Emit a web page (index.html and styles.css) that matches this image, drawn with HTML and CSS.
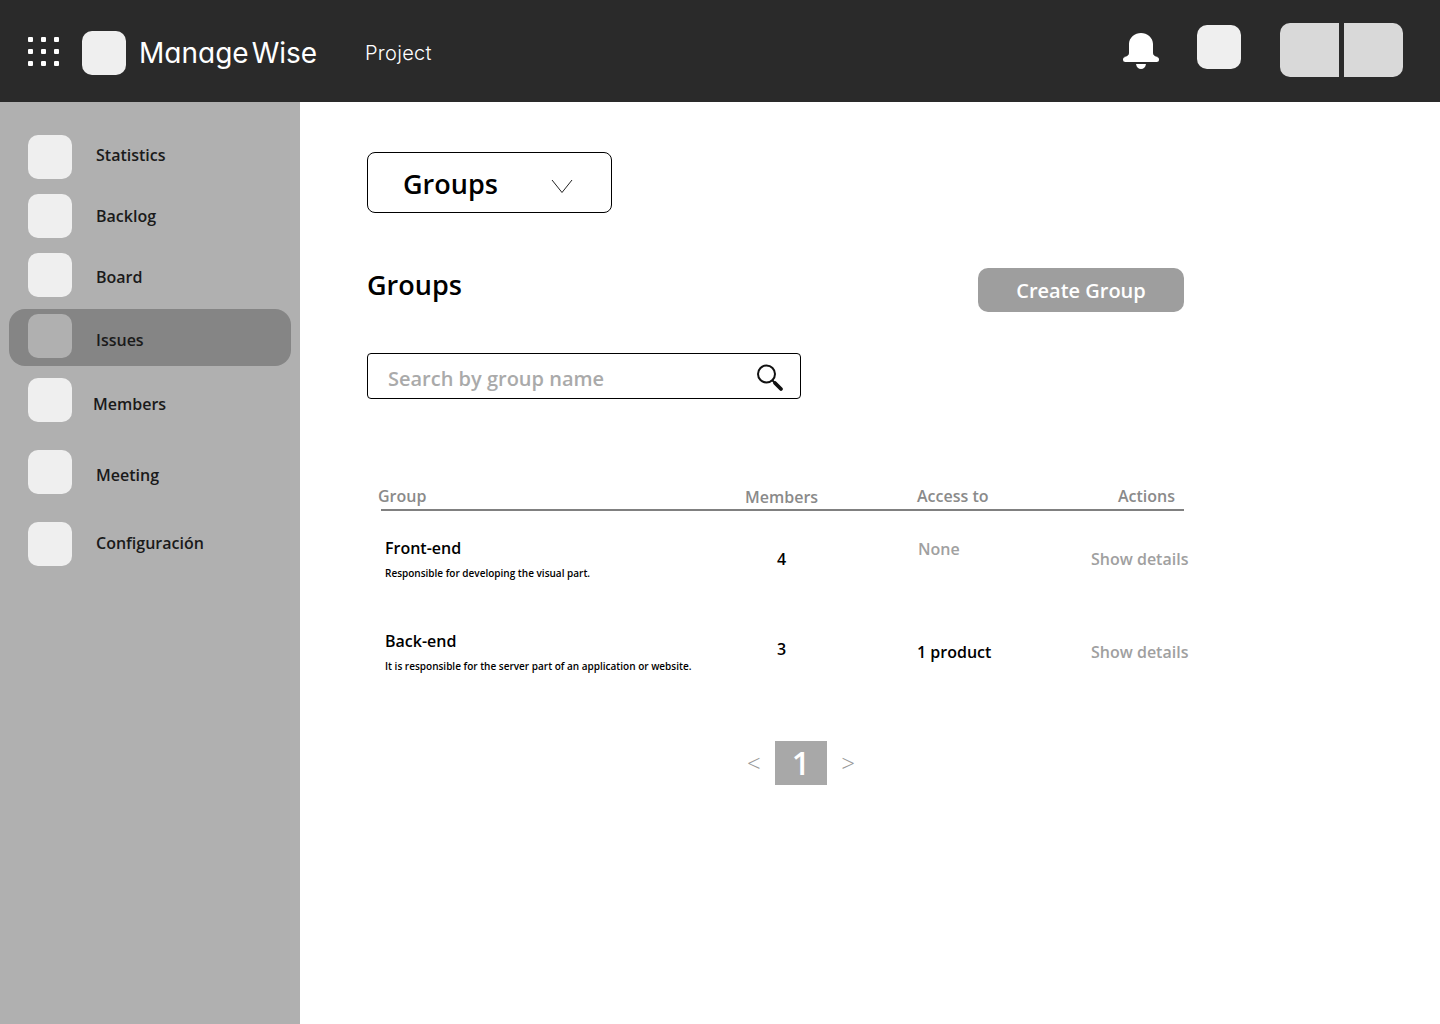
FILE: index.html
```html
<!DOCTYPE html>
<html lang="en">
<head>
  <meta charset="UTF-8" />
  <meta name="viewport" content="width=device-width, initial-scale=1.0"/>
  <title>ManageWise - Groups</title>
  <link rel="stylesheet" href="styles.css">
</head>
<body>
  <header class="topbar">
    <div class="apps-grid">
      <span></span><span></span><span></span>
      <span></span><span></span><span></span>
      <span></span><span></span><span></span>
    </div>
    <div class="logo-box"></div>
    <div class="brand">Manage<span class="brand-end">Wise</span></div>
    <div class="project-link">Project</div>
    <div class="topbar-right">
      <svg class="bell" width="36" height="36" viewBox="0 0 36 36" fill="#fff">
        <path d="M18 0C12 0 6 4.500 6 11V20C6 22 4.500 23.500 1 24H35C31.500 23.500 30 22 30 20V11C30 4.500 24 0 18 0Z"/>
        <rect x="0" y="24" width="36" height="5" rx="2.500"/>
        <path d="M13 31H23C22.500 34.500 20.500 36 18 36C15.500 36 13.500 34.500 13 31Z"/>
      </svg>
      <div class="square-btn"></div>
      <div class="user-box">
        <div class="user-left"></div>
        <div class="user-right"></div>
      </div>
    </div>
  </header>

  <div class="layout">
    <aside class="sidebar">
      <nav class="nav">
        <a class="nav-item label-up"><span class="nav-icon"></span><span class="nav-label">Statistics</span></a>
        <a class="nav-item"><span class="nav-icon"></span><span class="nav-label">Backlog</span></a>
        <a class="nav-item label-down"><span class="nav-icon"></span><span class="nav-label">Board</span></a>
        <a class="nav-item active"><span class="nav-icon"></span><span class="nav-label">Issues</span></a>
        <a class="nav-item members label-low"><span class="nav-icon"></span><span class="nav-label">Members</span></a>
        <a class="nav-item wide label-mid"><span class="nav-icon"></span><span class="nav-label">Meeting</span></a>
        <a class="nav-item wide label-raised"><span class="nav-icon"></span><span class="nav-label">Configuración</span></a>
      </nav>
    </aside>

    <main class="content">
      <div class="dropdown">
        <span>Groups</span>
        <svg width="22" height="14" viewBox="0 0 22 14" fill="none" stroke="#222" stroke-width="1">
          <path d="M1 1L11 13.500L21 1"/>
        </svg>
      </div>

      <div class="title-row">
        <h1>Groups</h1>
        <button class="btn-create">Create Group</button>
      </div>

      <div class="search">
        <span>Search by group name</span>
        <svg width="28" height="28" viewBox="0 0 28 28" fill="none" stroke="#111">
          <circle cx="10.500" cy="10" r="8.500" stroke-width="2"/>
          <path d="M16.500 16.500L19 19" stroke-width="1.800"/>
          <path d="M19 19L25 25" stroke-width="3.800" stroke-linecap="round"/>
        </svg>
      </div>

      <div class="table">
        <div class="table-head">
          <div class="th-group">Group</div>
          <div class="th-members">Members</div>
          <div>Access to</div>
          <div class="th-actions">Actions</div>
        </div>

        <div class="table-row">
          <div>
            <div class="group-name">Front-end</div>
            <div class="group-desc">Responsible for developing the visual part.</div>
          </div>
          <div class="cell-count count-low">4</div>
          <div class="cell-access muted">None</div>
          <div class="cell-action">Show details</div>
        </div>

        <div class="table-row">
          <div>
            <div class="group-name">Back-end</div>
            <div class="group-desc">It is responsible for the server part of an application or website.</div>
          </div>
          <div class="cell-count">3</div>
          <div class="cell-access access-low">1 product</div>
          <div class="cell-action">Show details</div>
        </div>
      </div>

      <div class="pagination">
        <span class="page-arrow">&lt;</span>
        <span class="page-num">1</span>
        <span class="page-arrow">&gt;</span>
      </div>
    </main>
  </div>
</body>
</html>
```

FILE: styles.css
```css
:root {
  --color-dark: #2a2a2a;
  --color-side: #b0b0b0;
  --color-box: #efefef;
  --color-muted: #a0a0a0;
  --color-head: #8a8a8a;
  --font: 'Open Sans', sans-serif;
}
* {
  box-sizing: border-box;
}
body {
  margin: 0;
  font-family: var(--font);
  background: #fff;
  color: #000;
}

/* top bar */
.topbar {
  height: 102px;
  background: var(--color-dark);
  display: flex;
  align-items: center;
  padding: 0 37px 0 28px;
}
.apps-grid {
  display: grid;
  grid-template-columns: repeat(3, 5px);
  grid-template-rows: repeat(3, 5px);
  gap: 7px 8px;
  width: 31px;
  margin-right: 23px;
  margin-top: 1px;
}
.apps-grid span {
  background: #fff;
  border-radius: 1px;
}
.logo-box {
  width: 44px;
  height: 44px;
  background: var(--color-box);
  border-radius: 10px;
  margin-top: 4px;
  margin-right: 13px;
}
.brand {
  font-family: 'Inter', sans-serif;
  font-feature-settings: 'cv11';
  font-weight: 400;
  font-size: 28px;
  color: #fff;
  margin-top: 3px;
  width: 226px;
}
.brand-end {
  margin-left: 3px;
}
.project-link {
  font-family: 'Inter', sans-serif;
  font-weight: 300;
  font-size: 20px;
  letter-spacing: 0.3px;
  color: #fff;
  margin-top: 3px;
}
.topbar-right {
  margin-left: auto;
  display: flex;
  align-items: center;
}
.bell {
  margin-right: 38px;
}
.square-btn {
  width: 44px;
  height: 44px;
  background: var(--color-box);
  border-radius: 10px;
  margin-right: 39px;
  margin-bottom: 8px;
}
.user-box {
  display: flex;
  gap: 5px;
  margin-bottom: 2px;
}
.user-left,
.user-right {
  width: 59px;
  height: 54px;
  background: #d9d9d9;
}
.user-left {
  border-radius: 10px 0 0 10px;
}
.user-right {
  border-radius: 0 10px 10px 0;
}

/* sidebar */
.layout {
  display: flex;
  height: 922px;
}
.sidebar {
  width: 300px;
  flex-shrink: 0;
  background: var(--color-side);
  padding: 33px 9px 0;
}
.nav {
  display: flex;
  flex-direction: column;
}
.nav-item {
  display: flex;
  align-items: center;
  height: 44px;
  padding-left: 19px;
  margin-bottom: 15px;
}
.nav-icon {
  width: 44px;
  height: 44px;
  background: var(--color-box);
  border-radius: 10px;
  flex-shrink: 0;
}
.nav-label {
  margin-left: 24px;
  font-size: 16px;
  font-weight: 600;
  color: #1a1a1a;
}
.label-up .nav-label {
  margin-top: -4px;
}
.label-down .nav-label {
  margin-top: 4px;
}
.label-low .nav-label {
  margin-top: 7px;
}
.label-mid .nav-label {
  margin-top: 5px;
}
.label-raised .nav-label {
  margin-top: -2px;
}
.nav-item.active {
  height: 57px;
  margin-top: -3px;
  margin-bottom: 12px;
  background: #858585;
  border-radius: 16px;
  align-items: flex-start;
  padding-top: 5px;
}
.active .nav-icon {
  background: var(--color-side);
}
.active .nav-label {
  margin-top: 15px;
}
.nav-item.members {
  margin-bottom: 28px;
}
.members .nav-label {
  margin-left: 21px;
}
.nav-item.wide {
  margin-bottom: 28px;
}

/* main */
.content {
  flex: 1;
  padding: 50px 0 0 67px;
}
.dropdown {
  width: 245px;
  height: 61px;
  border: 1px solid #000;
  border-radius: 8px;
  display: flex;
  align-items: center;
  padding: 2px 38px 0 35px;
  justify-content: space-between;
  font-size: 27px;
  font-weight: 600;
}
.dropdown svg {
  margin-top: 5px;
}
.title-row {
  width: 817px;
  display: flex;
  justify-content: space-between;
  align-items: flex-start;
  margin-top: 55px;
}
.title-row h1 {
  margin: -1px 0 0;
  font-size: 27px;
  font-weight: 600;
  line-height: 36px;
}
.btn-create {
  width: 206px;
  height: 44px;
  border: none;
  border-radius: 10px;
  background: #9e9e9e;
  color: #fff;
  font-family: var(--font);
  font-size: 20px;
  font-weight: 600;
  cursor: pointer;
}
.search {
  width: 434px;
  height: 46px;
  margin-top: 41px;
  border: 1px solid #000;
  border-radius: 4px;
  display: flex;
  align-items: center;
  justify-content: space-between;
  padding: 4px 16px 0 20px;
  font-size: 20px;
  font-weight: 600;
  color: #aaa;
}

/* table */
.table {
  width: 803px;
  margin: 85px 0 0 14px;
}
.table-head,
.table-row {
  display: grid;
  grid-template-columns: 364px 172px 174px 93px;
}
.table-head {
  border-bottom: 2px solid #808080;
  font-size: 16px;
  font-weight: 600;
  color: var(--color-head);
  height: 27px;
  padding-top: 1px;
  line-height: 22px;
  white-space: nowrap;
}
.th-group {
  margin-left: -3px;
}
.th-members {
  margin-top: 1px;
}
.th-actions {
  text-align: right;
  padding-right: 9px;
}
.table-row {
  height: 93px;
  padding-top: 26px;
  white-space: nowrap;
}
.group-name {
  padding-left: 4px;
  font-size: 16px;
  font-weight: 600;
  line-height: 23px;
}
.group-desc {
  padding-left: 4px;
  margin-top: 6px;
  font-size: 10px;
  font-weight: 600;
  line-height: 14px;
}
.cell-count {
  width: 73px;
  text-align: center;
  font-size: 16px;
  font-weight: 600;
  line-height: 22px;
  margin-top: 8px;
}
.count-low {
  margin-top: 11px;
}
.cell-access {
  font-size: 16px;
  font-weight: 600;
  line-height: 22px;
}
.muted {
  color: var(--color-muted);
  padding-left: 1px;
  margin-top: 1px;
}
.access-low {
  margin-top: 11px;
}
.cell-action {
  font-size: 16px;
  font-weight: 600;
  line-height: 22px;
  color: var(--color-muted);
  margin-top: 11px;
}

/* pagination */
.pagination {
  width: 108px;
  margin: 44px 0 0 380px;
  display: flex;
  align-items: center;
  justify-content: space-between;
}
.page-arrow {
  font-size: 24px;
  font-weight: 300;
  color: #999;
  margin-bottom: 2px;
}
.page-num {
  width: 52px;
  height: 44px;
  background: #a8a8a8;
  color: #fff;
  font-size: 32px;
  font-weight: 600;
  line-height: 44px;
  text-align: center;
}
```
